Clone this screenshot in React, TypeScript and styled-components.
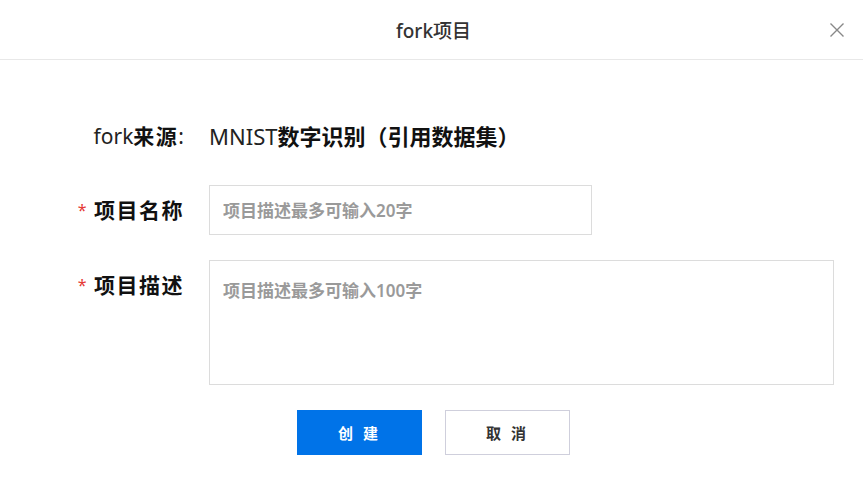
import React from "react";
import styled, { createGlobalStyle } from "styled-components";

const Global = createGlobalStyle`
  html, body { margin: 0; padding: 0; background: #fff; }
  body { font-family: "Noto Sans", "Noto Sans CJK SC", sans-serif; }
  * { box-sizing: border-box; }
`;

const Dialog = styled.div`
  width: 863px;
  height: 501px;
  background: #fff;
  display: flex;
  flex-direction: column;
`;

const Header = styled.div`
  height: 60px;
  border-bottom: 1px solid #e8e8e8;
  display: grid;
  grid-template-columns: 1fr auto 1fr;
  align-items: center;
  padding: 0 14px 0 14px;
`;

const Title = styled.div`
  grid-column: 2;
  font-size: 19px;
  color: #333;
  font-family: "Noto Sans", "Noto Sans CJK SC", sans-serif;
  font-weight: 500;
  padding-left: 4px;
`;

const Close = styled.button`
  grid-column: 3;
  justify-self: end;
  border: none;
  background: transparent;
  padding: 4px;
  display: flex;
  cursor: pointer;
`;

const Body = styled.div`
  padding: 61px 0 0 0;
  display: flex;
  flex-direction: column;
`;

const Row = styled.div<{ $mb: number }>`
  display: grid;
  grid-template-columns: 184px 1fr;
  column-gap: 25px;
  align-items: start;
  margin-bottom: ${(p) => p.$mb}px;
`;

const Label = styled.div<{ $lh: number }>`
  text-align: right;
  font-size: 21px;
  line-height: ${(p) => p.$lh}px;
  color: #111;
  font-weight: 600;
  letter-spacing: 1.5px;
  white-space: nowrap;
`;

const Latin = styled.span`
  font-weight: 400;
  letter-spacing: 0;
  color: #222;
`;

const Star = styled.span`
  color: #e53935;
  font-size: 16px;
  font-weight: 400;
  margin-right: 6px;
  vertical-align: 2px;
`;

const Value = styled.div`
  font-size: 22px;
  line-height: 30px;
  color: #111;
  font-weight: 600;
  white-space: nowrap;
`;

const Input = styled.input`
  width: 383px;
  height: 50px;
  border: 1px solid #dcdcdc;
  padding: 0 13px;
  font-size: 17px;
  font-family: inherit;
  outline: none;
  caret-color: #333;
  &::placeholder {
    color: #9a9a9a;
    font-weight: 600;
  }
`;

const TextArea = styled.textarea`
  width: 625px;
  height: 125px;
  border: 1px solid #dcdcdc;
  padding: 18px 13px;
  font-size: 17px;
  line-height: 24px;
  font-family: inherit;
  resize: none;
  outline: none;
  &::placeholder {
    color: #9a9a9a;
    font-weight: 600;
  }
`;

const Actions = styled.div`
  display: flex;
  justify-content: center;
  gap: 23px;
  padding-left: 4px;
`;

const Button = styled.button<{ $primary?: boolean }>`
  width: 125px;
  height: 45px;
  font-family: inherit;
  font-size: 15px;
  font-weight: 700;
  letter-spacing: 3px;
  cursor: pointer;
  border: 1px solid ${(p) => (p.$primary ? "#0073e8" : "#cfcfdc")};
  background: ${(p) => (p.$primary ? "#0073e8" : "#fff")};
  color: ${(p) => (p.$primary ? "#fff" : "#333")};
`;

export default function App() {
  return (
    <>
      <Global />
      <Dialog>
        <Header>
          <Title>fork项目</Title>
          <Close aria-label="close">
            <svg width="16" height="16" viewBox="0 0 16 16">
              <path d="M1.5 1.5 L14.5 14.5 M14.5 1.5 L1.5 14.5" stroke="#888" strokeWidth="1.4" fill="none" />
            </svg>
          </Close>
        </Header>
        <Body>
          <Row $mb={34}>
            <Label $lh={30}>
              <Latin>fork</Latin>来源<Latin>:</Latin>
            </Label>
            <Value>
              <Latin>MNIST</Latin>数字识别（引用数据集）
            </Value>
          </Row>
          <Row $mb={25}>
            <Label $lh={50}>
              <Star>*</Star>项目名称
            </Label>
            <Input placeholder="项目描述最多可输入20字" autoFocus />
          </Row>
          <Row $mb={25}>
            <Label $lh={50}>
              <Star>*</Star>项目描述
            </Label>
            <TextArea placeholder="项目描述最多可输入100字" />
          </Row>
          <Actions>
            <Button $primary>创 建</Button>
            <Button>取 消</Button>
          </Actions>
        </Body>
      </Dialog>
    </>
  );
}
